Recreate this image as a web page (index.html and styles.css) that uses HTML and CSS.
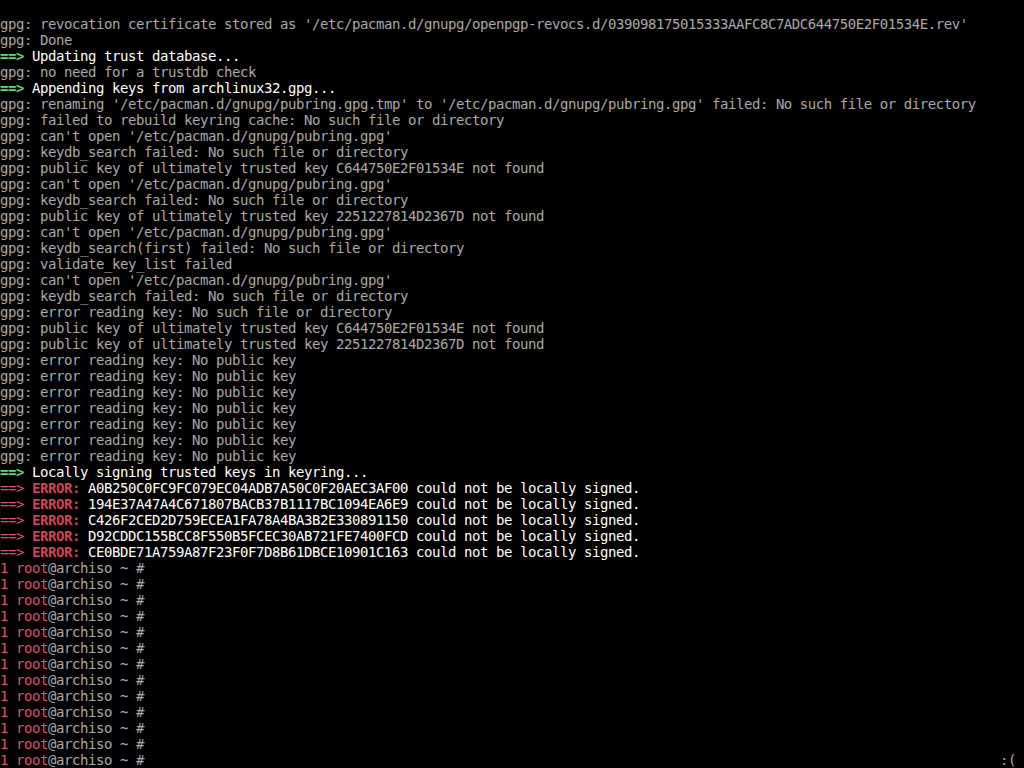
FILE: index.html
```html
<!DOCTYPE html>
<html>
<head>
<meta charset="utf-8">
<link rel="stylesheet" href="styles.css">
</head>
<body>
<div class="term">
<div class="ln"> </div>
<div class="ln">gpg: revocation certificate stored as '/etc/pacman.d/gnupg/openpgp-revocs.d/039098175015333AAFC8C7ADC644750E2F01534E.rev'</div>
<div class="ln">gpg: Done</div>
<div class="ln"><span class="g">==&gt;</span> <span class="w">Updating trust database...</span></div>
<div class="ln">gpg: no need for a trustdb check</div>
<div class="ln"><span class="g">==&gt;</span> <span class="w">Appending keys from archlinux32.gpg...</span></div>
<div class="ln">gpg: renaming '/etc/pacman.d/gnupg/pubring.gpg.tmp' to '/etc/pacman.d/gnupg/pubring.gpg' failed: No such file or directory</div>
<div class="ln">gpg: failed to rebuild keyring cache: No such file or directory</div>
<div class="ln">gpg: can't open '/etc/pacman.d/gnupg/pubring.gpg'</div>
<div class="ln">gpg: keydb_search failed: No such file or directory</div>
<div class="ln">gpg: public key of ultimately trusted key C644750E2F01534E not found</div>
<div class="ln">gpg: can't open '/etc/pacman.d/gnupg/pubring.gpg'</div>
<div class="ln">gpg: keydb_search failed: No such file or directory</div>
<div class="ln">gpg: public key of ultimately trusted key 2251227814D2367D not found</div>
<div class="ln">gpg: can't open '/etc/pacman.d/gnupg/pubring.gpg'</div>
<div class="ln">gpg: keydb_search(first) failed: No such file or directory</div>
<div class="ln">gpg: validate_key_list failed</div>
<div class="ln">gpg: can't open '/etc/pacman.d/gnupg/pubring.gpg'</div>
<div class="ln">gpg: keydb_search failed: No such file or directory</div>
<div class="ln">gpg: error reading key: No such file or directory</div>
<div class="ln">gpg: public key of ultimately trusted key C644750E2F01534E not found</div>
<div class="ln">gpg: public key of ultimately trusted key 2251227814D2367D not found</div>
<div class="ln">gpg: error reading key: No public key</div>
<div class="ln">gpg: error reading key: No public key</div>
<div class="ln">gpg: error reading key: No public key</div>
<div class="ln">gpg: error reading key: No public key</div>
<div class="ln">gpg: error reading key: No public key</div>
<div class="ln">gpg: error reading key: No public key</div>
<div class="ln">gpg: error reading key: No public key</div>
<div class="ln"><span class="g">==&gt;</span> <span class="w">Locally signing trusted keys in keyring...</span></div>
<div class="ln"><span class="r">==&gt;</span> <span class="rb">ERROR:</span> <span class="w">A0B250C0FC9FC079EC04ADB7A50C0F20AEC3AF00 could not be locally signed.</span></div>
<div class="ln"><span class="r">==&gt;</span> <span class="rb">ERROR:</span> <span class="w">194E37A47A4C671807BACB37B1117BC1094EA6E9 could not be locally signed.</span></div>
<div class="ln"><span class="r">==&gt;</span> <span class="rb">ERROR:</span> <span class="w">C426F2CED2D759ECEA1FA78A4BA3B2E330891150 could not be locally signed.</span></div>
<div class="ln"><span class="r">==&gt;</span> <span class="rb">ERROR:</span> <span class="w">D92CDDC155BCC8F550B5FCEC30AB721FE7400FCD could not be locally signed.</span></div>
<div class="ln"><span class="r">==&gt;</span> <span class="rb">ERROR:</span> <span class="w">CE0BDE71A759A87F23F0F7D8B61DBCE10901C163 could not be locally signed.</span></div>
<div class="ln"><span class="r">1 root</span>@archiso ~ #</div>
<div class="ln"><span class="r">1 root</span>@archiso ~ #</div>
<div class="ln"><span class="r">1 root</span>@archiso ~ #</div>
<div class="ln"><span class="r">1 root</span>@archiso ~ #</div>
<div class="ln"><span class="r">1 root</span>@archiso ~ #</div>
<div class="ln"><span class="r">1 root</span>@archiso ~ #</div>
<div class="ln"><span class="r">1 root</span>@archiso ~ #</div>
<div class="ln"><span class="r">1 root</span>@archiso ~ #</div>
<div class="ln"><span class="r">1 root</span>@archiso ~ #</div>
<div class="ln"><span class="r">1 root</span>@archiso ~ #</div>
<div class="ln"><span class="r">1 root</span>@archiso ~ #</div>
<div class="ln"><span class="r">1 root</span>@archiso ~ #</div>
<div class="ln last"><span><span class="r">1 root</span>@archiso ~ #</span><span class="rps">:(</span></div>
</div>
</body>
</html>
```
FILE: styles.css
```css
html, body {
  margin: 0;
  padding: 0;
  background: #000;
}
.term {
  width: 1024px;
  height: 768px;
  overflow: hidden;
  background: #000;
  color: #aaaaaa;
  font-family: "DejaVu Sans Mono", "Liberation Mono", monospace;
  font-size: 14px;
  letter-spacing: -0.43px;
  line-height: 16px;
}
.ln {
  height: 16px;
  white-space: pre;
}
.last {
  display: flex;
  justify-content: space-between;
  padding-right: 8px;
}
.g { color: #5fdc5f; font-weight: bold; }
.w { color: #ffffff; }
.r { color: #e24f60; }
.rb { color: #d8404f; font-weight: bold; }
.rps { color: #aaaaaa; }
```
